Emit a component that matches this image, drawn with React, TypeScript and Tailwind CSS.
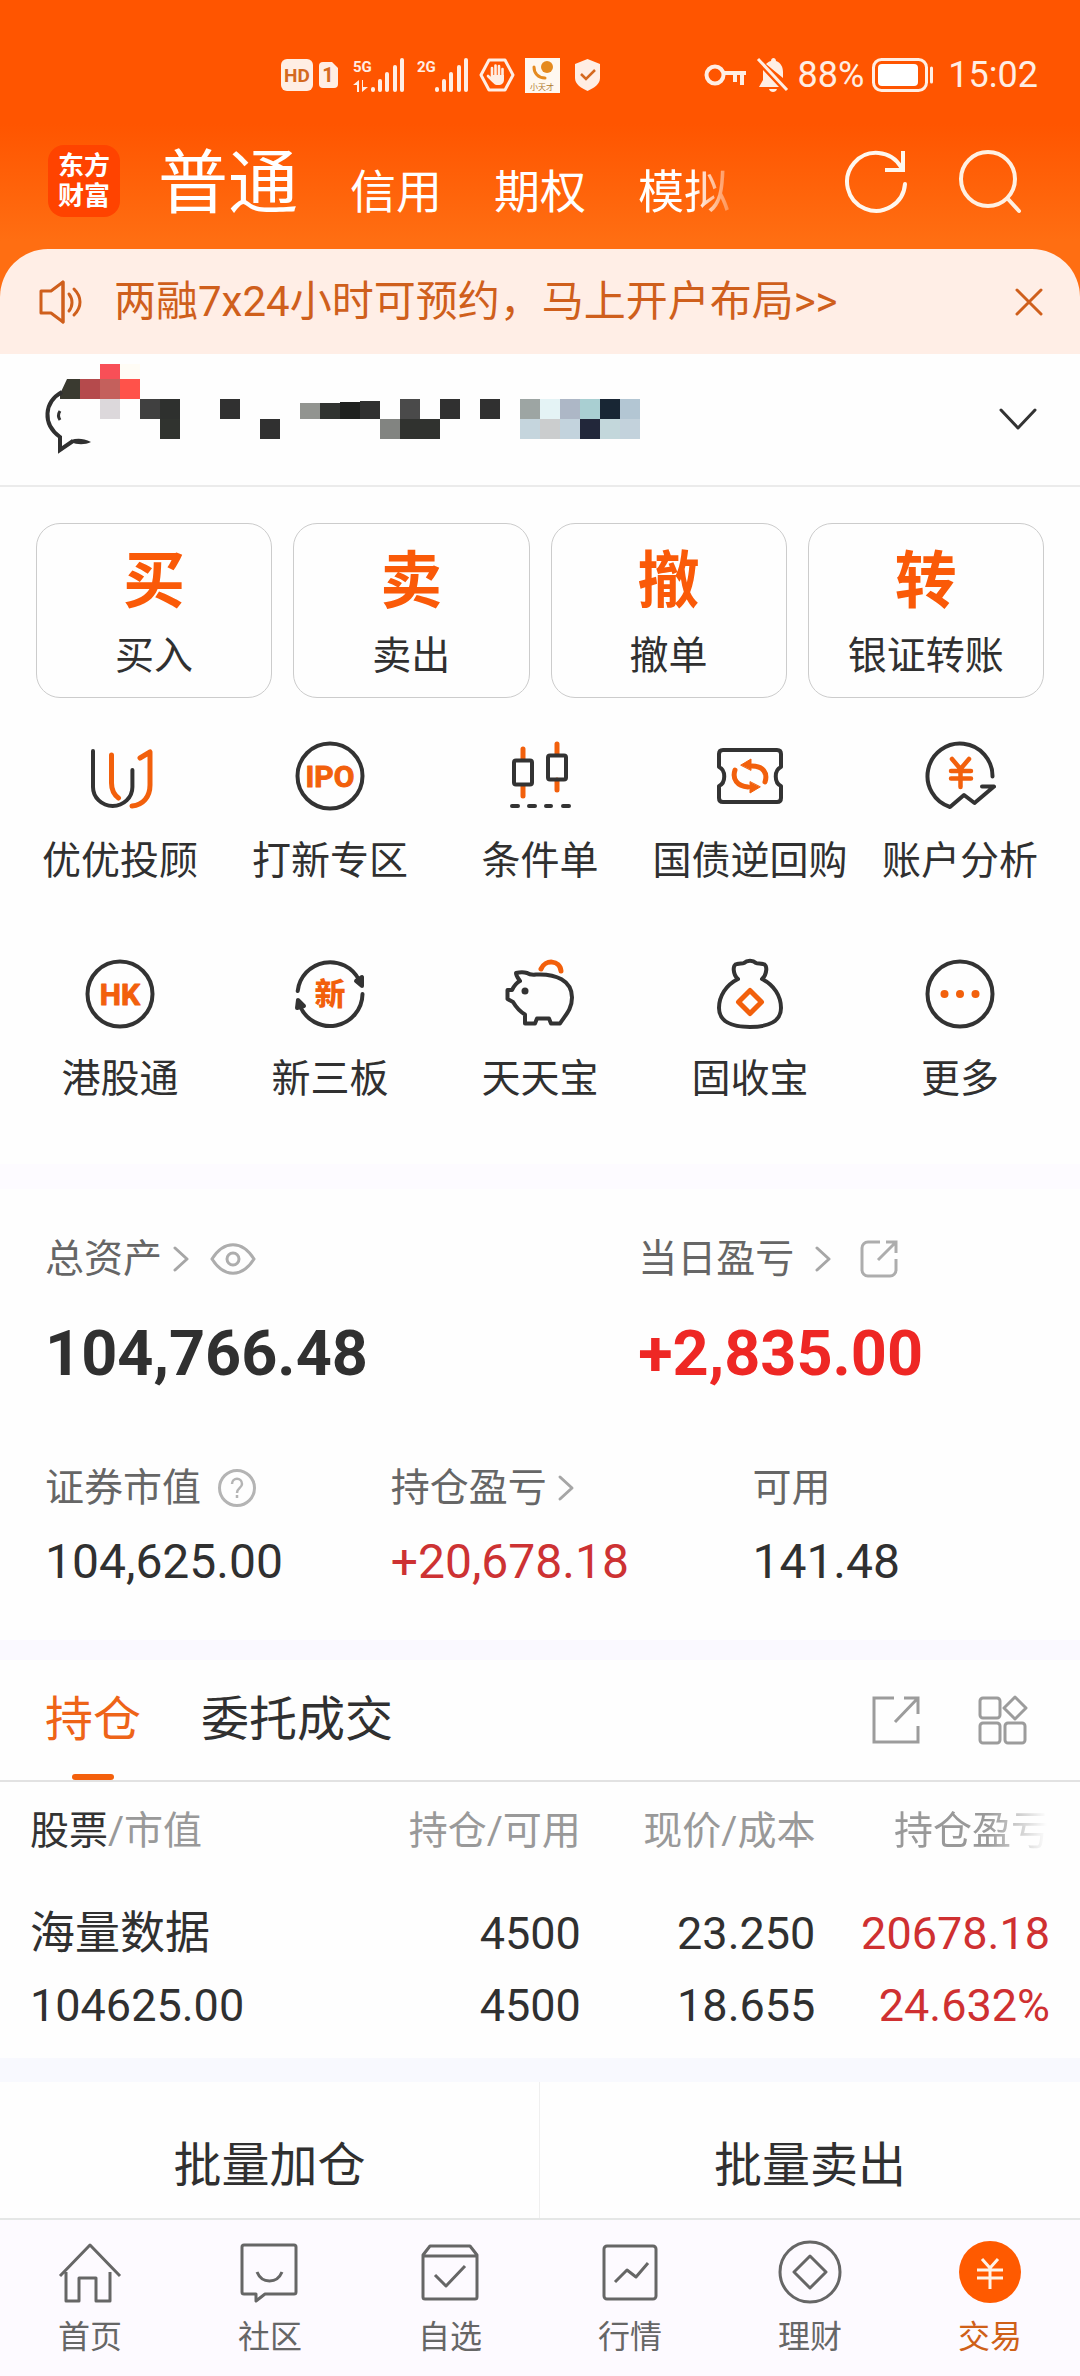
import type { ReactNode } from "react";

const DARK = "#333333";
const ORANGE = "#f2600c";

function StatusBar() {
  return (
    <div className="flex h-[90px] items-end justify-end pr-[42px] pt-14 text-[#ffeee4]">
      <div className="flex h-[30px] items-center" aria-hidden="true">
        <svg width="32" height="34" viewBox="0 0 32 34">
          <rect width="32" height="32" y="1" rx="6" fill="#ffeee4" />
          <text x="16" y="24" textAnchor="middle" fontSize="19" fontWeight="700" fill="#d4691f">HD</text>
        </svg>
        <svg className="ml-1.5" width="20" height="28" viewBox="0 0 20 28">
          <path d="M4 1h9l6 6v16a4 4 0 0 1-4 4H4a4 4 0 0 1-4-4V5a4 4 0 0 1 4-4z" fill="#ffeee4" />
          <text x="9" y="21" textAnchor="middle" fontSize="20" fontWeight="700" fill="#d4691f">1</text>
        </svg>
        <svg className="ml-3.5" width="52" height="36" viewBox="0 0 52 36" fill="currentColor">
          <text x="0" y="15" fontSize="15" fontWeight="700">5G</text>
          <path d="M4 35V28H0l6-5v12zM10 23v7h5l-6 5V23z" />
          <rect x="18" y="30" width="4" height="5" rx="2" />
          <rect x="25" y="22" width="4" height="13" rx="2" />
          <rect x="32" y="15" width="4" height="20" rx="2" />
          <rect x="40" y="8" width="4" height="27" rx="2" />
          <rect x="47" y="1" width="4" height="34" rx="2" />
        </svg>
        <svg className="ml-3" width="52" height="36" viewBox="0 0 52 36" fill="currentColor">
          <text x="0" y="15" fontSize="15" fontWeight="700">2G</text>
          <rect x="18" y="30" width="4" height="5" rx="2" />
          <rect x="25" y="22" width="4" height="13" rx="2" />
          <rect x="32" y="15" width="4" height="20" rx="2" />
          <rect x="40" y="8" width="4" height="27" rx="2" />
          <rect x="47" y="1" width="4" height="34" rx="2" />
        </svg>
        <svg className="ml-2.5" width="36" height="34" viewBox="0 0 36 34">
          <path d="M10 2h16l8 15-8 15H10L2 17z" fill="none" stroke="currentColor" strokeWidth="3" strokeLinejoin="round" />
          <path d="M13 19v-9M16.500 18V7.500M20 18V8M23.500 19v-8M9 18l5 5" stroke="currentColor" strokeWidth="2.600" strokeLinecap="round" />
          <path d="M12 17h13v4c0 4-2 6-6 6s-5-2-7-6z" fill="currentColor" />
        </svg>
        <svg className="ml-2.5" width="35" height="35" viewBox="0 0 35 35">
          <rect width="35" height="35" fill="#fff8f0" />
          <path d="M9 9c0 6 4 11 11 11" fill="none" stroke="#e58a1f" strokeWidth="3" strokeLinecap="round" />
          <circle cx="22" cy="9" r="6" fill="#e58a1f" />
          <text x="17" y="32" textAnchor="middle" fontSize="8" fill="#b07a30">小天才</text>
        </svg>
        <svg className="ml-3.5" width="27" height="34" viewBox="0 0 27 34">
          <path d="M13.500 1L26 6v14c0 6-6 10-12.500 13C7 30 1 26 1 20V6z" fill="currentColor" />
          <path d="M7 16l5 5 9-9" fill="none" stroke="#d4691f" strokeWidth="2.500" />
        </svg>
      </div>
      <div className="ml-[103px] flex h-[30px] items-center">
        <svg width="42" height="24" viewBox="0 0 42 24" fill="none" stroke="currentColor" strokeWidth="4" aria-hidden="true">
          <circle cx="11" cy="12" r="8.500" />
          <path d="M20 10h22M31 10v9M38 10v12" />
        </svg>
        <svg className="ml-2.5" width="34" height="36" viewBox="0 0 34 36" aria-hidden="true">
          <path d="M10 7c2-2 4-3 5-3 0-4 5-4 5 0 5 2 7 6 7 11v6zM7 13l16 17H3l4-7z" fill="currentColor" />
          <path d="M13 32h8c-1 4-7 4-8 0z" fill="currentColor" />
          <path d="M2 2l29 31" stroke="currentColor" strokeWidth="3" />
        </svg>
        <span className="ml-2 text-4xl leading-9">88%</span>
        <svg className="ml-2" width="62" height="34" viewBox="0 0 62 34" aria-hidden="true">
          <rect x="1.500" y="1.500" width="53" height="31" rx="8" fill="none" stroke="currentColor" strokeWidth="3" />
          <rect x="6" y="6" width="40" height="22" rx="4" fill="#fff" />
          <path d="M59.500 10v14" stroke="currentColor" strokeWidth="3" strokeLinecap="round" />
        </svg>
        <span className="ml-3.5 text-4xl leading-9">15:02</span>
      </div>
    </div>
  );
}

function Header() {
  return (
    <header className="flex items-center pb-8 pl-12 pr-[57px] pt-[55px] text-white">
      <div className="flex size-[72px] shrink-0 flex-col items-center justify-center rounded-2xl bg-[#ff4300] text-[26px] font-bold leading-[30px]">
        <span>东方</span>
        <span>财富</span>
      </div>
      <nav className="ml-[38px] flex h-[72px] items-baseline gap-[52px] pt-[3px] text-[46px] leading-[72px]">
        <a href="#normal" className="text-[70px]">普通</a>
        <a href="#credit">信用</a>
        <a href="#options">期权</a>
        <a href="#simulate" className="[mask-image:linear-gradient(to_right,black_60%,transparent_115%)]">模拟</a>
      </nav>
      <div className="ml-auto flex items-center gap-[48px]">
        <button aria-label="刷新">
          <svg className="block" width="66" height="66" viewBox="0 0 66 66" fill="none" stroke="#fff7ee" strokeWidth="4">
            <path d="M58 19A29 29 0 1 0 62 36" strokeLinecap="round" />
            <path d="M60 3v19H42" />
          </svg>
        </button>
        <button aria-label="搜索">
          <svg className="block" width="66" height="66" viewBox="0 0 66 66" fill="none" stroke="#fff0e2" strokeWidth="4" strokeLinecap="round">
            <circle cx="31" cy="31" r="27" />
            <path d="M51 51l11 12" />
          </svg>
        </button>
      </div>
    </header>
  );
}

function Notice() {
  return (
    <div className="flex h-[105px] items-center rounded-t-[48px] bg-[#ffeee6] pl-[38px] pr-9 text-[#cf5f1c]">
      <svg width="44" height="44" viewBox="0 0 44 44" fill="none" stroke="currentColor" strokeWidth="3" strokeLinejoin="round" strokeLinecap="round" aria-hidden="true">
        <path d="M25 2L13 11H3v22h10l12 9z" />
        <path d="M25 2v40M31 14c4 5 4 12 0 17M36 9c8 8 8 18 0 26" />
      </svg>
      <a href="#margin" className="ml-8 text-[42px] leading-[56px]">两融7x24小时可预约，马上开户布局&gt;&gt;</a>
      <button aria-label="关闭" className="ml-auto">
        <svg className="block" width="30" height="30" viewBox="0 0 30 30" stroke="currentColor" strokeWidth="3" strokeLinecap="round">
          <path d="M3 3l24 24M27 3L3 27" />
        </svg>
      </button>
    </div>
  );
}

/* Each mosaic cell is [x, y, width, height, colour]. */
const MOSAIC: [number, number, number, number, string][] = [
  [60, 0, 20, 15, "#f84f57"], [80, 0, 20, 15, "#fffcf5"],
  [40, 15, 20, 20, "#b54a4c"], [60, 15, 20, 20, "#c4605c"], [80, 15, 20, 20, "#ff524a"],
  [60, 35, 20, 20, "#dcd8db"], [100, 35, 20, 20, "#404040"], [120, 35, 20, 20, "#2e302e"],
  [180, 35, 20, 20, "#303030"], [260, 39, 20, 16, "#929490"], [280, 39, 20, 16, "#303330"],
  [300, 38, 20, 17, "#1f211f"], [320, 37, 20, 18, "#303030"], [360, 35, 20, 20, "#4a4a4a"],
  [400, 35, 20, 20, "#303030"], [440, 35, 20, 20, "#303030"],
  [480, 35, 20, 20, "#9da5a3"], [500, 35, 20, 20, "#e4f3f5"], [520, 35, 20, 20, "#adb7c6"],
  [540, 35, 20, 20, "#a9cfd2"], [560, 35, 20, 20, "#182634"], [580, 35, 20, 20, "#b3c6d3"],
  [120, 55, 20, 20, "#30332f"], [220, 55, 20, 20, "#303030"], [340, 55, 20, 20, "#828481"],
  [360, 55, 40, 20, "#30322f"], [480, 55, 20, 20, "#c5d5dd"], [500, 55, 20, 20, "#cbcdce"],
  [520, 55, 20, 20, "#c3d3dd"], [540, 55, 20, 20, "#22273a"], [560, 55, 20, 20, "#c3d7db"],
  [580, 55, 20, 20, "#c3d2dc"],
];

function Account() {
  return (
    <button aria-label="切换账户" className="flex h-[133px] w-full items-start justify-between border-b-2 border-[#ebebeb] pl-10 pr-[42px] pt-2.5">
      <svg width="604" height="92" viewBox="0 0 604 92" aria-hidden="true">
        {MOSAIC.map(([x, y, w, h, c]) => (
          <rect key={`${x}-${y}`} x={x} y={y} width={w} height={h} fill={c} />
        ))}
        <path d="M27 15h13v20H20v-5z" fill="#3a3a30" />
        <path d="M22 28C4 38 2 60 20 73v13l13-9" fill="none" stroke="#303030" strokeWidth="4" />
        <path d="M31 76c6-2 12-2 20 2-6 3-14 3-20 0z" fill="#303030" />
        <path d="M20 47c-2 3-2 6 0 9" stroke="#303030" strokeWidth="3" fill="none" />
      </svg>
      <svg className="mt-[42px]" width="40" height="26" viewBox="0 0 40 26" fill="none" stroke={DARK} strokeWidth="3" strokeLinecap="round" strokeLinejoin="round">
        <path d="M3 4l17 18L37 4" />
      </svg>
    </button>
  );
}

const TRADES = [
  ["买", "买入"],
  ["卖", "卖出"],
  ["撤", "撤单"],
  ["转", "银证转账"],
];

function Icon({ children }: { children: ReactNode }) {
  return (
    <svg width="72" height="72" viewBox="0 0 72 72" fill="none" stroke={DARK} strokeWidth="4" strokeLinecap="round" strokeLinejoin="round" aria-hidden="true">
      {children}
    </svg>
  );
}

const FEATURES: { label: string; art: ReactNode }[] = [
  {
    label: "优优投顾",
    art: (
      <>
        <path d="M9 11v36a19.700 19 0 0 0 39.400 0V30" />
        <path d="M27.500 15v28c0 6 3 12 7 15M56 18l10-6v33c0 12-7 20-18 21" stroke={ORANGE} strokeWidth="5" />
      </>
    ),
  },
  {
    label: "打新专区",
    art: (
      <>
        <circle cx="36" cy="36" r="32.500" />
        <text x="36" y="47" textAnchor="middle" fontSize="30" fontWeight="700" fill={ORANGE} stroke={ORANGE} strokeWidth="1">IPO</text>
      </>
    ),
  },
  {
    label: "条件单",
    art: (
      <>
        <path d="M19 9v10M19 46v10M53 4v10M53 40v10" stroke={ORANGE} strokeWidth="5" />
        <rect x="10" y="20.500" width="18" height="24" rx="2" />
        <rect x="44" y="15.500" width="18" height="24" rx="2" />
        <path d="M8 66h6M25 66h6M42 66h5M59 66h6" />
      </>
    ),
  },
  {
    label: "国债逆回购",
    art: (
      <>
        <path d="M9 10h54q4 0 4 4v13c-7 3-7 16 0 19v12q0 4-4 4H9q-4 0-4-4V46c7-3 7-16 0-19V14q0-4 4-4z" />
        <path d="M51 42c3-9-2-16-13-16M21 30c-3 9 2 16 13 17" stroke={ORANGE} strokeWidth="5" />
        <path d="M27 25l10-6v11zM46 47l-10 6V42z" fill={ORANGE} stroke={ORANGE} strokeWidth="1" />
      </>
    ),
  },
  {
    label: "账户分析",
    art: (
      <>
        <path d="M68.500 36.500A32.500 32.500 0 1 0 26 67l14-12 10.500 8L70 46.500H58" />
        <path d="M28 19l8.500 10L45 19M36.500 29v18M27 31h20M27 38.500h20" stroke={ORANGE} strokeWidth="4.500" />
      </>
    ),
  },
  {
    label: "港股通",
    art: (
      <>
        <circle cx="36" cy="36" r="32.500" />
        <text x="36" y="47" textAnchor="middle" fontSize="30" fontWeight="700" fill={ORANGE} stroke={ORANGE} strokeWidth="1">HK</text>
      </>
    ),
  },
  {
    label: "新三板",
    art: (
      <>
        <path d="M3.700 33A32.500 32.500 0 0 1 65 22M68.500 36A32.500 32.500 0 0 1 6 48" />
        <path d="M68 28l-6-5 6-4zM4 42l-1 8 7-2z" fill={DARK} />
        <text x="36" y="47" textAnchor="middle" fontSize="31" fontWeight="900" fill={ORANGE} stroke="none">新</text>
      </>
    ),
  },
  {
    label: "天天宝",
    art: (
      <>
        <path d="M37 11c4-10 19-9 20 2" stroke={ORANGE} strokeWidth="5" />
        <path d="M12 15c4-1 8-1 11 0 3 2 5 2 9 1.500 20-1 36 6 36 23 0 12-7 18-12 26h-9l-2-5H33l-2 5H21v-9C15 53 12 49 9 44l-5.500-3v-9H8c2-4 4-7 8-9-2-3-4-5-4-8z" />
        <circle cx="21" cy="33" r="3.500" fill={DARK} stroke="none" />
      </>
    ),
  },
  {
    label: "固收宝",
    art: (
      <>
        <path d="M24 21c-5-4-6-15-1-15 3-1 5 0 7-1 3-3 9-3 12 0 2 1 4 0 7 1 5 0 4 11-1 15 12 6 19 17 19 29 0 13-12 19-31 19S5 63 5 50c0-12 7-23 19-29z" />
        <path d="M36 32.500L47.500 44 36 55.500 24.500 44z" stroke={ORANGE} strokeWidth="5" />
      </>
    ),
  },
  {
    label: "更多",
    art: (
      <>
        <circle cx="36" cy="36" r="32.500" />
        <g fill={ORANGE} stroke="none">
          <circle cx="20.500" cy="36" r="4" />
          <circle cx="36" cy="36" r="4" />
          <circle cx="51.500" cy="36" r="4" />
        </g>
      </>
    ),
  },
];

function Shortcuts() {
  return (
    <section className="pb-[61px] pt-9">
      <div className="grid grid-cols-4 gap-[21px] px-9">
        {TRADES.map(([glyph, label]) => (
          <button key={label} className="flex flex-col items-center rounded-3xl border border-[#cccccc] pb-[17px] pt-[26px]">
            <span className="text-[62px] font-bold leading-[64px] text-[#fa5a08]" aria-hidden="true">{glyph}</span>
            <span className="mt-[18px] text-[39px] leading-[48px]">{label}</span>
          </button>
        ))}
      </div>
      <div className="mt-[42px] grid grid-cols-5 gap-y-[73px] px-[15px]">
        {FEATURES.map(({ label, art }) => (
          <button key={label} className="flex flex-col items-center">
            <Icon>{art}</Icon>
            <span className="mt-[25px] whitespace-nowrap text-[39px] leading-[48px]">{label}</span>
          </button>
        ))}
      </div>
    </section>
  );
}

function Chevron() {
  return (
    <svg width="18" height="28" viewBox="0 0 18 28" fill="none" stroke="#a6a6a6" strokeWidth="3" strokeLinecap="round" strokeLinejoin="round" aria-hidden="true">
      <path d="M3 3l12 11L3 25" />
    </svg>
  );
}

function Assets() {
  return (
    <section className="px-[45px] pb-[50px] pt-[46px]">
      <div className="grid grid-cols-[592fr_396fr]">
        <div>
          <div className="flex items-center text-[39px] leading-[48px] text-[#666666]">
            <a href="#assets" className="flex items-center gap-2.5">总资产<Chevron /></a>
            <button aria-label="隐藏金额" className="ml-5">
              <svg className="block" width="46" height="32" viewBox="0 0 46 32" fill="none" stroke="#adadad" strokeWidth="3">
                <path d="M2 16C14-3 32-3 44 16 32 35 14 35 2 16z" />
                <circle cx="23" cy="16" r="6" />
              </svg>
            </button>
          </div>
          <p className="mt-[39px] text-[63px] font-bold leading-[64px]">104,766.48</p>
        </div>
        <div>
          <div className="flex items-center text-[39px] leading-[48px] text-[#666666]">
            <a href="#daily" className="flex items-center gap-5">当日盈亏<Chevron /></a>
            <button aria-label="分享盈亏" className="ml-7">
              <svg className="block" width="38" height="38" viewBox="0 0 38 38" fill="none" stroke="#adadad" strokeWidth="3">
                <path d="M20 2H8a6 6 0 0 0-6 6v22a6 6 0 0 0 6 6h22a6 6 0 0 0 6-6V19" />
                <path d="M26 2h10v11M36 2L18 20" />
              </svg>
            </button>
          </div>
          <p className="mt-[39px] text-[63px] font-bold leading-[64px] text-[#ee2724]">+2,835.00</p>
        </div>
      </div>
      <div className="mt-[78px] grid grid-cols-[345fr_361fr_282fr]">
        <div>
          <div className="flex items-center text-[39px] leading-[48px] text-[#666666]">
            证券市值
            <button aria-label="说明" className="ml-4">
              <svg className="block" width="40" height="40" viewBox="0 0 40 40" fill="none" stroke="#b4b4b4" strokeWidth="3">
                <circle cx="20" cy="20" r="17.500" />
                <path d="M15 16c0-7 10-7 10 0 0 4-5 4-5 9M20 27v3" strokeWidth="2.500" />
              </svg>
            </button>
          </div>
          <p className="mt-[22px] text-5xl leading-[56px]">104,625.00</p>
        </div>
        <div>
          <a href="#holding" className="flex items-center gap-2.5 text-[39px] leading-[48px] text-[#666666]">持仓盈亏<Chevron /></a>
          <p className="mt-[22px] text-5xl leading-[56px] text-[#cd3233]">+20,678.18</p>
        </div>
        <div>
          <div className="text-[39px] leading-[48px] text-[#666666]">可用</div>
          <p className="mt-[22px] text-5xl leading-[56px]">141.48</p>
        </div>
      </div>
    </section>
  );
}

function Tabs() {
  return (
    <div className="flex h-[122px] items-stretch border-b-2 border-[#e2e2e2] pl-[45px] pr-[52px] text-5xl">
      <button className="relative text-[#ee6418]">
        持仓
        <span className="absolute bottom-0 left-1/2 h-1.5 w-[42px] -translate-x-1/2 rounded-sm bg-[#f4600c]" />
      </button>
      <button className="ml-[60px]">委托成交</button>
      <button aria-label="分享持仓" className="ml-auto">
        <svg className="block" width="48" height="48" viewBox="0 0 48 48" fill="none" stroke="#9c9c9c" strokeWidth="3">
          <path d="M22 2H2v44h44V30M32 2h14v16M46 2L23 26" />
        </svg>
      </button>
      <button aria-label="更多功能" className="ml-[58px]">
        <svg className="block" width="50" height="50" viewBox="0 0 50 50" fill="none" stroke="#9c9c9c" strokeWidth="3" strokeLinejoin="round">
          <rect x="2" y="3" width="20" height="20" rx="3" />
          <rect x="2" y="28" width="20" height="20" rx="3" />
          <rect x="27" y="28" width="20" height="20" rx="3" />
          <path d="M37 2l11 11-11 11-11-11z" />
        </svg>
      </button>
    </div>
  );
}

function Holdings() {
  return (
    <div className="px-[30px]">
      <table className="w-full table-fixed">
        <thead>
          <tr className="h-[98px] text-right text-[39px] leading-[48px] text-[#999999]">
            <th className="w-[34%] text-left font-normal"><span className="text-[#333333]">股票</span>/市值</th>
            <th className="w-[20%] whitespace-nowrap font-normal">持仓/可用</th>
            <th className="w-[23%] whitespace-nowrap font-normal">现价/成本</th>
            <th className="w-[23%] whitespace-nowrap font-normal">
              <span className="inline-block align-bottom [mask-image:linear-gradient(to_right,black_60%,transparent_98%)]">持仓盈亏</span>
            </th>
          </tr>
        </thead>
        <tbody>
          <tr className="text-right text-[45px] leading-[72px]">
            <td className="pb-4 pt-[18px] text-left">海量数据<br />104625.00</td>
            <td className="pb-4 pt-[18px]">4500<br />4500</td>
            <td className="pb-4 pt-[18px]">23.250<br />18.655</td>
            <td className="pb-4 pt-[18px] text-[#cf3031]">20678.18<br />24.632%</td>
          </tr>
        </tbody>
      </table>
    </div>
  );
}

const NAV: { label: string; art: ReactNode; active?: boolean }[] = [
  { label: "首页", art: <path d="M2 36L32 5l30 31M8 32v29h13V38h17v23h14V32" /> },
  {
    label: "社区",
    art: (
      <>
        <path d="M6 5h50a2 2 0 0 1 2 2v45a2 2 0 0 1-2 2H27l-9 7v-7H6a2 2 0 0 1-2-2V7a2 2 0 0 1 2-2z" />
        <path d="M19 32c5 12 20 12 25 0" />
      </>
    ),
  },
  {
    label: "自选",
    art: (
      <>
        <path d="M5 15l7-9h40l7 9v42a2 2 0 0 1-2 2H7a2 2 0 0 1-2-2zM5 16h54" />
        <path d="M17 35l11 11 19-20" />
      </>
    ),
  },
  {
    label: "行情",
    art: (
      <>
        <rect x="6" y="6" width="52" height="53" rx="3" />
        <path d="M17 42l12-12 9 7 12-14" />
      </>
    ),
  },
  {
    label: "理财",
    art: (
      <>
        <circle cx="32" cy="32" r="30" />
        <path d="M32 16l16 16-16 16-16-16z" />
      </>
    ),
  },
  {
    label: "交易",
    active: true,
    art: (
      <>
        <circle cx="32" cy="32" r="31" fill="#ff5a00" stroke="none" />
        <path d="M24 19l8 9 8-9M32 28v21M19 30h26M19 38h26" stroke="#fff3e8" />
      </>
    ),
  },
];

function BottomNav() {
  return (
    <nav className="grid grid-cols-6 border-t-2 border-[#e5e7e6] bg-[#fdfaff] pb-[19px] pt-5">
      {NAV.map(({ label, art, active }) => (
        <a key={label} href={`#${label}`} className={active ? "flex flex-col items-center text-[#cf6018]" : "flex flex-col items-center text-[#666666]"}>
          <svg width="64" height="64" viewBox="0 0 64 64" fill="none" stroke="currentColor" strokeWidth="3" strokeLinejoin="round" aria-hidden="true">
            {art}
          </svg>
          <span className="mt-[13px] text-[32px] leading-10">{label}</span>
        </a>
      ))}
    </nav>
  );
}

export default function App() {
  return (
    <div className="flex min-h-screen flex-col bg-[#fefefe] font-[Roboto,'Noto_Sans_CJK_SC',sans-serif] text-[#303030]" lang="zh-CN">
      <div className="bg-[linear-gradient(to_bottom,#ff5500_35%,#ff6e12_68%)]">
        <StatusBar />
        <Header />
        <Notice />
      </div>
      <Account />
      <Shortcuts />
      <div className="h-[25px] bg-[#fdfbff]" />
      <Assets />
      <div className="h-5 bg-[#faf9ff]" />
      <Tabs />
      <Holdings />
      <div className="h-6 bg-[#f8f9fe]" />
      <div className="grid grid-cols-2 divide-x divide-[#efefef] text-5xl leading-[56px]">
        <button className="pb-6 pt-14">批量加仓</button>
        <button className="pb-6 pt-14">批量卖出</button>
      </div>
      <BottomNav />
    </div>
  );
}
